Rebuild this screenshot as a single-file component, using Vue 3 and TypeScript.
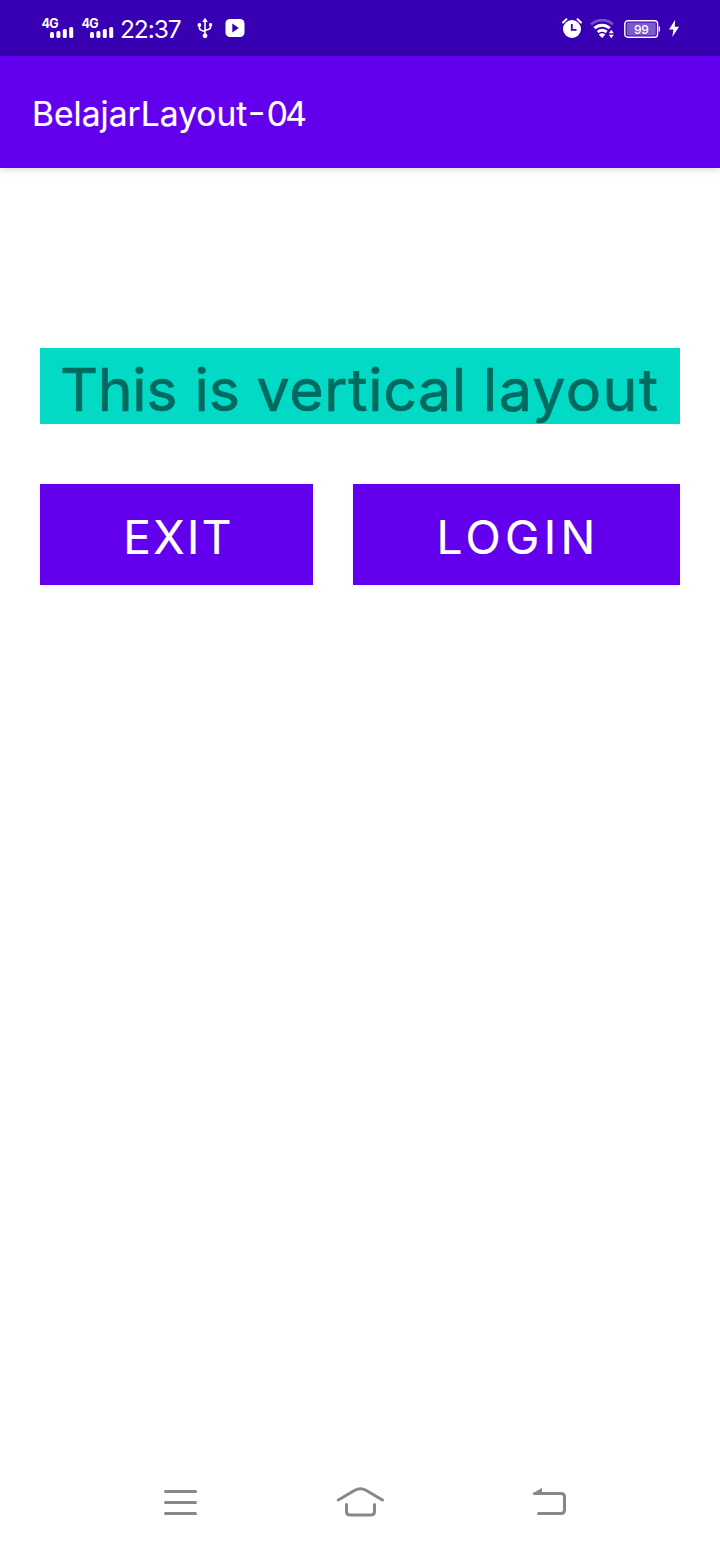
<script setup lang="ts">
const bars: number[] = [6, 7, 9, 11]
const sims: string[] = ['4G', '4G']
</script>

<template>
  <div class="screen">
    <header class="status">
      <svg v-for="(s, i) in sims" :key="i" class="signal" width="34" height="24" viewBox="0 0 34 24">
        <text class="net" x="-.6" y="12">{{ s }}</text>
        <rect v-for="(h, b) in bars" :key="b" :x="8 + b * 6.4" :y="22 - h" width="4" :height="h" rx="1.5" fill="#fff" />
      </svg>
      <span class="clock">22:37</span>
      <svg class="usb" width="16" height="22" viewBox="0 0 16 22" fill="none" stroke="#fff" stroke-width="1.6">
        <path d="M8 3v15M2.4 8.5v2.3c0 1.7 1 2.4 2.5 2.8L8 14.7M13.6 8v1.8c0 1.7-1 2.4-2.5 2.8L8 13.5" />
        <path d="M8 .8 10.8 5H5.2ZM12.1 6.3h3v2.9h-3Z" fill="#fff" stroke="none" />
        <circle cx="2.4" cy="8" r="1.9" fill="#fff" stroke="none" />
        <circle cx="8" cy="18.8" r="2.4" fill="#fff" stroke="none" />
      </svg>
      <svg class="play" width="20" height="18" viewBox="0 0 20 18">
        <rect x=".5" width="19" height="18" rx="4.5" fill="#fff" />
        <path d="M7.3 4.4v9.2l6.5-4.6Z" fill="#3700b3" />
      </svg>
      <svg class="alarm" width="20" height="20" viewBox="0 0 20 20" fill="none">
        <circle cx="10" cy="11" r="9" fill="#fff" />
        <path d="M1 4.5 4.4 1.2M19 4.5 15.6 1.2" stroke="#fff" stroke-width="2" stroke-linecap="round" />
        <path d="M9.8 6v5.8h4.7" stroke="#3700b3" stroke-width="1.8" />
      </svg>
      <svg class="wifi" width="25" height="20" viewBox="0 0 25 20" fill="none" stroke="#fff" stroke-width="2.9">
        <path d="M1 5.5C7.5-.3 17-.3 23 5.5" opacity=".3" />
        <path d="M4.4 9.2c4.7-4 10.8-4 15.4 0" />
        <path d="M7.7 13c2.7-2.2 6.2-2.2 9 0" />
        <path d="m8.8 15.4 3.3 3.6 3.3-3.6c-2-1.6-4.6-1.6-6.6 0ZM18.8 14.3l2.5-3.6 2.5 3.6ZM18.8 15.8h5l-2.5 3.4Z" fill="#fff" stroke="none" />
      </svg>
      <svg class="battery" width="36" height="19" viewBox="0 0 36 19">
        <rect x=".8" y=".8" width="32.8" height="16.4" rx="3" fill="none" stroke="#fff" stroke-width="1.4" />
        <rect x="2.6" y="2.6" width="29.2" height="12.8" rx="1.3" fill="#fff" opacity=".35" />
        <path d="M35.3 6.5v5" stroke="#fff" stroke-width="1.2" />
        <text class="level" x="17.2" y="14">99</text>
      </svg>
      <svg class="bolt" width="11" height="19" viewBox="0 0 11 19"><path d="M6.2.8 0 10.5H4.4L3.3 18 10.1 7.7H5.7Z" fill="#fff" /></svg>
    </header>
    <div class="appbar"><h1>BelajarLayout<span class="dash">-</span><span class="num">04</span></h1></div>
    <main>
      <p class="banner"><span class="w1">This</span> <span class="w2">is</span> <span class="w3">vertical</span> <span class="w4">layout</span></p>
      <div class="actions">
        <button class="exit" type="button">EXIT</button>
        <button class="login" type="button">LOGIN</button>
      </div>
    </main>
    <nav>
      <svg width="34" height="26" viewBox="0 0 34 26"><path d="M1.5 1.5h30M1.5 12.5h30M1.5 23.5h30" /></svg>
      <svg class="home" width="48" height="32" viewBox="0 0 48 32"><path d="M2.3 14 18.9 4.3Q24.4 1 29.9 4.3L46.5 14M10.5 18.5V25.5q0 3.5 3.5 3.5h21q3.5 0 3.5-3.5v-7" /></svg>
      <svg class="back" width="36" height="30" viewBox="0 0 36 30"><path d="M3 6.5h26q3.5 0 3.5 3.5v13q0 3.5-3.5 3.5H6.5" /><path class="tip" d="M.3 6.5 10 1v6.5H1Z" /></svg>
    </nav>
  </div>
</template>

<style>
body { margin: 0; background: #fff; }
</style>

<style scoped>
.screen { width: 720px; height: 1544px; display: flex; flex-direction: column; background: #fff; font-family: Inter, "Liberation Sans", sans-serif; overflow: hidden; }
.status { height: 56px; box-sizing: border-box; padding: 0 40px 0 42px; display: flex; align-items: flex-start; background: #3700b3; color: #fff; }
.status svg { flex: none; }
.signal { margin-top: 16px; margin-right: 6px; overflow: visible; }
.net { font: 700 12.5px Inter, sans-serif; letter-spacing: -.6px; fill: #fff; }
.clock { width: 62px; margin: 13px 0 0 -2px; font-size: 24.5px; line-height: 32px; letter-spacing: -1.1px; white-space: nowrap; }
.usb { margin: 17px 0 0 15px; }
.play { margin: 19px 0 0 12px; }
.alarm { margin: 18px 0 0 auto; }
.wifi { margin: 19px 0 0 8px; }
.battery { margin: 20px 0 0 9px; }
.level { font: 500 12px Inter, sans-serif; letter-spacing: -.4px; fill: #fff; text-anchor: middle; }
.bolt { margin: 19px 0 0 9px; }
.appbar { height: 112px; flex: none; box-sizing: border-box; padding: 38px 0 0 32px; background: #6200ee; box-shadow: 0 1px 8px rgba(0, 0, 0, .17); color: #fff; }
h1 { display: flex; margin: 0; font-size: 33.5px; line-height: 41px; font-weight: 400; letter-spacing: .05px; -webkit-text-stroke: .2px #fff; white-space: nowrap; }
.dash { margin: -2px 0 0 2px; transform: scaleX(1.15); }
.num { margin-left: 2px; letter-spacing: -2.8px; }
main { flex: 1; padding: 180px 40px 0; }
.banner { margin: 0; height: 76px; box-sizing: border-box; padding-left: 20px; display: flex; background: #03dac5; color: #016a60; font-size: 59px; font-weight: 400; line-height: 84px; -webkit-text-stroke: .7px #016a60; white-space: nowrap; }
.w1 { width: 134.5px; letter-spacing: -.3px; }
.w2 { width: 62px; }
.w3 { width: 226.5px; letter-spacing: .7px; }
.w4 { letter-spacing: 1.4px; }
.actions { display: flex; gap: 40px; margin-top: 60px; }
button { height: 101px; padding: 0; border: 0; background: #6200ee; color: #fff; font: 400 46px/106px Inter, sans-serif; -webkit-text-stroke: .2px #fff; box-shadow: 0 0 3px rgba(98, 0, 238, .1); }
.exit { width: 273px; padding-left: 4px; letter-spacing: 2.4px; }
.login { width: 327px; padding-left: 3px; letter-spacing: 4.4px; }
nav { display: flex; height: 84px; box-sizing: border-box; padding: 30px 0 0 164px; fill: none; stroke: #888; stroke-width: 3; stroke-linecap: round; stroke-linejoin: round; }
.home { margin: -4px 0 0 138px; }
.back { margin: -3px 0 0 148px; }
.tip { fill: #888; stroke: none; }
</style>
